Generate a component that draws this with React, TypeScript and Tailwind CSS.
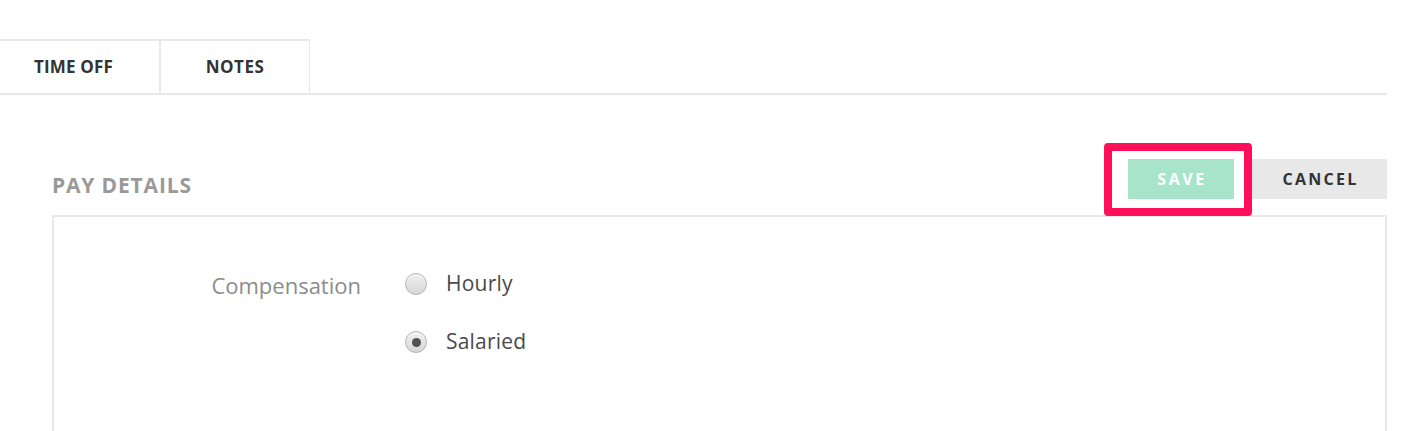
const font = { fontFamily: '"Open Sans", "Noto Sans", sans-serif' }

function Radio({ checked }: { checked?: boolean }) {
  return (
    <span className="flex h-[22px] w-[22px] items-center justify-center rounded-full border border-[#b3b3b3] bg-gradient-to-b from-[#f0f0f0] to-[#d6d6d6] shadow-[inset_0_1px_1px_rgba(255,255,255,0.8)]">
      {checked && <span className="h-[9px] w-[9px] rounded-full bg-[#505050]" />}
    </span>
  )
}

export default function App() {
  return (
    <div className="h-[431px] w-full overflow-hidden bg-white" style={font}>
      <div className="w-[1387px] pt-[39px]">
        {/* tabs */}
        <div className="flex border-b-2 border-[#e8e8e8]">
          <div className="flex h-[54px] w-[161px] items-center border-t-2 border-r-2 border-[#e8e8e8] pl-[34px] text-[17px] font-bold tracking-[0.01em] text-[#333]">
            TIME OFF
          </div>
          <div className="flex h-[54px] w-[149px] items-center justify-center border-t-2 border-r border-[#e8e8e8] text-[17px] font-bold tracking-[0.03em] text-[#333]">
            NOTES
          </div>
        </div>

        {/* section */}
        <div className="ml-[52px] pt-[64px]">
          <div className="flex items-end justify-between">
            <h2 className="text-[21px] font-bold leading-[28px] tracking-[0.04em] text-[#999]">PAY DETAILS</h2>
            <div className="relative flex">
              <button className="flex h-[40px] w-[106px] items-center justify-center bg-[#a8e4c9] pl-[2px] text-[16px] font-bold tracking-[0.16em] text-white">
                SAVE
              </button>
              <span className="pointer-events-none absolute left-[-24px] top-[-16px] h-[73px] w-[148px] rounded-[4px] border-[8px] border-[#ff0f5a]" />
              <button className="ml-[18px] flex h-[40px] w-[135px] items-center justify-center bg-[#e8e8e8] pl-[2px] text-[16px] font-bold tracking-[0.14em] text-[#333]">
                CANCEL
              </button>
            </div>
          </div>

          <div className="mt-[16px] h-[240px] border-2 border-[#e8e8e8] pt-[54px]">
            <div className="flex">
              <div className="w-[307px] pt-[1px] text-right text-[22px] font-medium leading-[26px] text-[#8c8c8c]">Compensation</div>
              <div className="ml-[44px] flex flex-col gap-[32px]">
                <label className="flex h-[26px] items-center gap-[19px] text-[21px] tracking-[0.01em] text-[#4a4a4a]">
                  <Radio />
                  Hourly
                </label>
                <label className="flex h-[26px] items-center gap-[19px] text-[21px] tracking-[0.01em] text-[#4a4a4a]">
                  <Radio checked />
                  Salaried
                </label>
              </div>
            </div>
          </div>
        </div>
      </div>
    </div>
  )
}
